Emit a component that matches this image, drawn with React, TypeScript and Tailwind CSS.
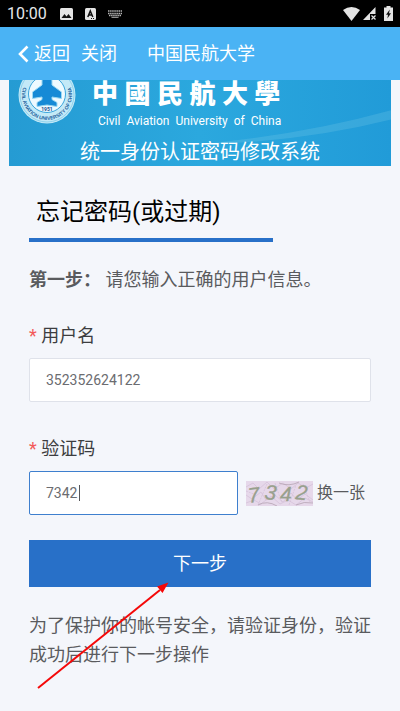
import { useState } from "react";

function StatusBar() {
  return (
    <div className="flex h-[27px] items-center bg-black pl-[7px] pr-[7px] text-gray-200">
      <span className="text-base leading-5">10:00</span>
      <svg className="ml-[13px] h-3 w-[13px]" viewBox="0 0 13 12">
        <rect width="13" height="12" rx="1.5" fill="#e4e4e4" />
        <path d="M1.5 10l3-4 2 2.5L8.500 6l3 4z" fill="#111" />
      </svg>
      <svg className="ml-[12px] h-3 w-[11px]" viewBox="0 0 11 12">
        <rect width="11" height="12" rx="1.5" fill="#e4e4e4" />
        <path
          d="M2.800 9L5.300 3L7.800 9M3.700 7h3.200"
          fill="none"
          stroke="#111"
          strokeWidth="1.500"
        />
        <path d="M6 10.500h3.500" stroke="#111" strokeDasharray="1 1" />
      </svg>
      <svg className="ml-3 h-2 w-[14px]" viewBox="0 0 14 8">
        <path
          d="M0 1h14M0 3.500h14M1 5.500h12"
          stroke="#b5b5b5"
          strokeWidth="1.500"
          strokeDasharray="1.500 0.600"
        />
        <path d="M3.500 7.300h7" stroke="#b5b5b5" />
      </svg>
      <svg className="ml-auto h-[14px] w-[17px]" viewBox="0 0 17 14">
        <path d="M0 3Q8.500-3 17 3L8.500 14z" fill="#e4e4e4" />
      </svg>
      <svg className="ml-[3px] h-[13px] w-[13px]" viewBox="0 0 13 13">
        <path d="M12.500 0v7H7v6H0z" fill="#e4e4e4" />
        <path d="M8.500 8.500l4 4M12.500 8.500l-4 4" stroke="#e4e4e4" strokeWidth="1.200" />
      </svg>
      <svg className="ml-2 h-[15px] w-[9px]" viewBox="0 0 9 15">
        <path d="M2.500 0h4v1.500H9V15H0V1.500h2.500z" fill="#e4e4e4" />
        <path d="M5.800 3.500L2 8.800h2L3.400 12.500L7 7.300H5z" fill="#111" />
      </svg>
    </div>
  );
}

function Emblem() {
  return (
    <svg className="size-[58px] shrink-0" viewBox="0 0 58 58">
      <circle cx="29" cy="29" r="28.500" fill="#c3e9f7" />
      <circle cx="29" cy="29" r="27" fill="none" stroke="#8fd2ec" />
      <circle cx="29" cy="28" r="18.500" fill="#eefaff" stroke="#3aa5dc" />
      <path
        d="M29 9c3 0 5 3 5 6v4L43.500 26v6.500L34 31v2.500l5 3V40.500L29 39l-10 1.500V36.500l5-3V31l-9.500 1.500V26L24 19v-4c0-3 2-6 5-6z"
        fill="#168ad6"
        stroke="#9bd8f2"
      />
      <path id="emblem-ring" d="M6.300 18.500A25 25 0 1 0 51.700 18.500" fill="none" />
      <text fontSize="5" fontWeight="700" fill="#1d5f9d" className="font-['Liberation_Sans',sans-serif]">
        <textPath href="#emblem-ring" startOffset="3">
          CIVIL AVIATION UNIVERSITY OF CHINA
        </textPath>
      </text>
      <text x="29" y="45" fontSize="5" fontWeight="700" textAnchor="middle" fill="#1d4f8d">
        1951
      </text>
    </svg>
  );
}

function Captcha() {
  return (
    <svg className="h-[25px] w-[67px]" viewBox="0 0 67 25" role="img" aria-label="验证码图片">
      <rect width="67" height="25" fill="#e6d8ea" />
      <g fill="none" stroke="#d2bfd7" strokeWidth="0.700">
        <path d="M0 6l7-4 6 6 8-7 7 7 9-6 8 6 7-6 8 5 7-4" />
        <path d="M0 14l6 4 9-7 5 8 9-5 8 7 8-9 6 7 8-6 8 6" />
        <path d="M0 22l8-3 7 4 10-8 9 8 8-4 8 5 9-7 8 4" />
        <path d="M0 10l10 4M12 24L21 3M29 2l7 20M43 24L50 4M57 3l7 18" strokeDasharray="2 1" />
      </g>
      <path
        d="M12 24q9-5 19 1M33 2q10 4 20-1M50 24q8-4 17-2"
        fill="none"
        stroke="#b5a3b3"
        strokeWidth="0.800"
      />
      <g
        fontSize="21"
        fontStyle="italic"
        fill="#98a08d"
        stroke="#98a08d"
        strokeWidth="0.300"
        className="font-['Liberation_Sans',sans-serif]"
      >
        <text x="3" y="22" transform="rotate(-8 3 22)">
          7
        </text>
        <text x="18" y="18" transform="rotate(6 18 18)">
          3
        </text>
        <text x="34" y="20">
          4
        </text>
        <text x="49" y="18" transform="rotate(6 49 18)">
          2
        </text>
      </g>
    </svg>
  );
}

export default function App() {
  const [username, setUsername] = useState("352352624122");
  const [code, setCode] = useState("7342");

  return (
    <div className="relative min-h-screen overflow-hidden bg-[#f4f6fb] font-[Roboto,'Noto_Sans_CJK_SC',sans-serif] text-lg text-[#5a5b5e]">
      <StatusBar />
      <header className="flex h-[53px] items-center bg-[#4ab3f4] pl-[17px] text-white">
        <button type="button" className="flex items-center gap-[5px]">
          <svg className="h-[18px] w-3" viewBox="0 0 12 18">
            <path d="M10.500 1.500L3 9l7.500 7.500" fill="none" stroke="#fff" strokeWidth="2.600" />
          </svg>
          返回
        </button>
        <button type="button" className="ml-[11px]">
          关闭
        </button>
        <h1 className="ml-[30px]">中国民航大学</h1>
      </header>

      <div className="mx-[9px] overflow-hidden bg-linear-to-r from-[#259bd3] via-[#2ba8de] to-[#219bd8] text-white">
        <div className="relative">
          <svg
            className="absolute inset-0 h-full w-full"
            viewBox="0 0 382 86"
            preserveAspectRatio="none"
          >
            <path d="M180 68Q290 60 382 38v8Q290 66 180 68z" fill="#7ccbe8" opacity="0.250" />
          </svg>
          <div className="relative -mt-[14px] flex h-[72px] items-start pl-[9px]">
            <Emblem />
            <div className="ml-4 mt-[9px]">
              <p className="text-[26px] font-black leading-[38px]">中 國 民 航 大 學</p>
              <p className="ml-[6px] flex gap-[6px] text-xs leading-4">
                <span>Civil</span>
                <span>Aviation</span>
                <span>University</span>
                <span>of</span>
                <span>China</span>
              </p>
            </div>
          </div>
          <p className="relative text-center text-xl leading-7">统一身份认证密码修改系统</p>
        </div>
      </div>

      <main className="px-[29px] pt-7">
        <h2 className="w-[244px] border-b-4 border-[#2870c8] px-[7px] pb-[7px] text-2xl leading-[37px] text-black">
          忘记密码(或过期)
        </h2>
        <p className="mt-6 leading-7">
          <strong>第一步：</strong> 请您输入正确的用户信息。
        </p>

        <form onSubmit={(e) => e.preventDefault()}>
          <label htmlFor="username" className="mt-7 block leading-7 text-[#3c3d40]">
            <span className="text-[#f35a5a]">*</span> 用户名
          </label>
          <input
            id="username"
            type="text"
            value={username}
            onChange={(e) => setUsername(e.target.value)}
            className="mt-2 block h-11 w-full rounded-xs border border-[#dfe2ea] bg-white px-4 text-sm text-[#6b6c70] outline-none"
          />

          <label htmlFor="code" className="mt-[33px] block leading-7 text-[#3c3d40]">
            <span className="text-[#f35a5a]">*</span> 验证码
          </label>
          <div className="mt-2 flex items-center">
            <div className="relative flex-1">
              <input
                id="code"
                type="text"
                value={code}
                onChange={(e) => setCode(e.target.value)}
                className="block h-11 w-full rounded-xs border border-[#3e7fce] bg-white px-4 text-sm text-[#6b6c70] outline-none"
              />
              <span className="absolute left-[50px] top-[14px] h-4 w-px bg-[#55565a]" />
            </div>
            <div className="ml-2 shrink-0">
              <Captcha />
            </div>
            <a href="#" className="ml-1 mr-[6px] shrink-0 text-base">
              换一张
            </a>
          </div>

          <button
            type="submit"
            className="mt-[25px] block h-[47px] w-full bg-[#2870c8] text-white"
          >
            下一步
          </button>
        </form>

        <p className="mt-6 leading-[29px]">
          为了保护你的帐号安全，请验证身份，验证成功后进行下一步操作
        </p>
      </main>

      <svg
        className="pointer-events-none absolute left-[36px] top-[582px] h-[108px] w-[134px]"
        viewBox="0 0 134 108"
      >
        <path d="M2 106L124 8" stroke="#f50808" strokeWidth="2" />
        <path d="M132.500 0.500L126.500 11L124 8L121 4.500z" fill="#f50808" />
      </svg>
    </div>
  );
}
